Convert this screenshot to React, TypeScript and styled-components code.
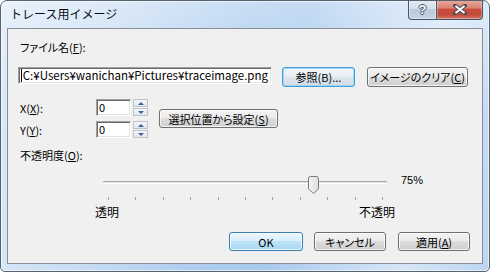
import React from 'react';
import styled, { createGlobalStyle } from 'styled-components';

const GlobalStyle = createGlobalStyle`
  html, body { margin: 0; padding: 0; background: #ffffff; }
  body {
    font-family: "Noto Sans CJK JP", "Liberation Sans", sans-serif;
    font-size: 12px;
    color: #000;
  }
  * { box-sizing: border-box; }
`;

const Window = styled.div`
  width: 490px;
  height: 272px;
  border: 1px solid #55636f;
  border-radius: 7px 7px 5px 5px;
  padding: 0 6px 7px 6px;
  display: flex;
  flex-direction: column;
  overflow: hidden;
  background:
    linear-gradient(180deg, rgba(255,255,255,0.35) 0%, rgba(255,255,255,0) 40%),
    linear-gradient(100deg, #dceaf8 0%, #c9def4 22%, #aecdef 45%, #a8c9ee 58%, #c3daf3 72%, #d6e6f7 84%, #bcd5f1 100%);
  box-shadow: inset 0 0 0 1px rgba(255,255,255,0.6);
`;

const TitleBar = styled.div`
  height: 27px;
  display: flex;
  align-items: flex-start;
  justify-content: space-between;
`;

const TitleText = styled.div`
  padding-left: 3px;
  line-height: 26px;
  font-size: 12px;
  color: #0b0b14;
`;

const CaptionButtons = styled.div`
  display: flex;
  margin-top: -1px;
`;

const HelpButton = styled.div`
  width: 28px;
  height: 20px;
  border: 1px solid #46556a;
  border-top: none;
  border-right: none;
  border-radius: 0 0 0 4px;
  background: linear-gradient(180deg, #e4ecf4 0%, #d3dfeb 45%, #b9cadb 50%, #c4d3e2 100%);
  box-shadow: inset 0 0 0 1px rgba(255,255,255,0.45);
  display: flex;
  align-items: center;
  justify-content: center;
  font-family: "Liberation Sans", sans-serif;
  font-weight: bold;
  font-size: 13px;
  color: #fff;
  text-shadow: 1px 0 0 #4a5566, -1px 0 0 #4a5566, 0 1px 0 #4a5566, 0 -1px 0 #4a5566;
`;

const CloseButton = styled.div`
  width: 47px;
  height: 20px;
  border: 1px solid #46556a;
  border-top: none;
  border-radius: 0 0 4px 0;
  background: linear-gradient(180deg, #e9aa9c 0%, #dc8474 42%, #c84a3a 50%, #c64b3b 78%, #d67a66 100%);
  box-shadow: inset 0 0 0 1px rgba(255,255,255,0.3);
  display: flex;
  align-items: center;
  justify-content: center;
`;

const Client = styled.div`
  flex: 1;
  background: #f0f0f0;
  border: 1px solid #858e99;
  display: flex;
  flex-direction: column;
  font-size: 11px;
  font-feature-settings: "palt";
`;

const Label = styled.div<{ $top: number; $left: number }>`
  margin-top: ${p => p.$top}px;
  padding-left: ${p => p.$left}px;
  line-height: 14px;
  white-space: nowrap;
`;

const Key = styled.span`
  text-decoration: underline;
  text-underline-offset: 1px;
`;

const PathRow = styled.div`
  display: flex;
  align-items: flex-start;
  margin-top: 13px;
  padding-left: 10px;
`;

const Field = styled.div<{ $width: number; $end?: boolean }>`
  position: relative;
  width: ${p => p.$width}px;
  height: 17px;
  background: #fff;
  border: 1px solid;
  border-color: #a0a0a0 #ffffff #ffffff #a0a0a0;
  box-shadow: inset 1px 1px 0 #696969, inset -1px -1px 0 #e3e3e3;
  padding: 0 3px 0 2px;
  line-height: 15px;
  overflow: hidden;
  white-space: nowrap;
  display: flex;
  align-items: center;
  justify-content: ${p => (p.$end ? 'flex-end' : 'flex-start')};
`;

const Caret = styled.span`
  position: absolute;
  left: 2px;
  top: 1px;
  width: 1px;
  height: 13px;
  background: #000;
`;

const PathText = styled.span`
  flex: none;
  font-feature-settings: normal;
  font-size: 11.5px;
`;

const Button = styled.div<{ $width: number; $height?: number; $gap?: number; $variant?: 'normal' | 'focus' | 'default' }>`
  width: ${p => p.$width}px;
  height: ${p => p.$height ?? 20}px;
  margin-left: ${p => p.$gap ?? 0}px;
  flex: none;
  border: 1px solid ${p => (p.$variant === 'focus' ? '#3d9fdc' : p.$variant === 'default' ? '#3c7fb1' : '#707070')};
  border-radius: 3px;
  background: ${p =>
    p.$variant === 'focus'
      ? 'linear-gradient(180deg, #f3f6f9 0%, #e9eef3 50%, #dde5ec 50%, #d3dde7 100%)'
      : p.$variant === 'default'
      ? 'linear-gradient(180deg, #e9f5fc 0%, #d9eefb 50%, #bde3f8 50%, #a9d8f2 100%)'
      : 'linear-gradient(180deg, #f2f2f2 0%, #ebebeb 50%, #dddddd 50%, #cfcfcf 100%)'};
  box-shadow: inset 0 0 0 1px ${p => (p.$variant === 'focus' ? '#9fd6f6' : 'rgba(255,255,255,0.75)')};
  display: flex;
  align-items: center;
  justify-content: center;
  line-height: 14px;
  white-space: nowrap;
`;

const XYGroup = styled.div`
  display: flex;
  align-items: center;
  margin-top: 12px;
  padding-left: 12px;
`;

const XYGrid = styled.div`
  display: grid;
  grid-template-columns: 76px auto;
  row-gap: 5px;
  align-items: center;
`;

const Spinner = styled.div`
  display: flex;
  align-items: flex-start;
  gap: 2px;
`;

const SpinButtons = styled.div`
  display: flex;
  flex-direction: column;
  gap: 1px;
`;

const SpinButton = styled.div<{ $dir: 'up' | 'down' }>`
  width: 15px;
  height: 8px;
  border: 1px solid #bcc4ce;
  background: linear-gradient(180deg, #f4f6f9 0%, #e2e7ee 100%);
  display: flex;
  align-items: center;
  justify-content: center;
  &::after {
    content: '';
    width: 0;
    height: 0;
    border-left: 3px solid transparent;
    border-right: 3px solid transparent;
    ${p => (p.$dir === 'up' ? 'border-bottom: 3px solid #3f5f96;' : 'border-top: 3px solid #3f5f96;')}
  }
`;

const SliderRow = styled.div`
  display: flex;
  align-items: flex-start;
  margin-top: 12px;
  padding-left: 95px;
`;

const Slider = styled.div`
  position: relative;
  width: 284px;
  height: 28px;
  display: flex;
  flex-direction: column;
`;

const Track = styled.div`
  margin-top: 7px;
  height: 3px;
  border-top: 1px solid #a9a9a9;
  border-bottom: 1px solid #ffffff;
  background: #e3e3e3;
  border-radius: 1px;
`;

const Ticks = styled.div`
  margin-top: 13px;
  margin-left: 5px;
  width: 275px;
  display: flex;
  justify-content: space-between;
`;

const Tick = styled.div`
  width: 1px;
  height: 3px;
  background: #a3a3a3;
`;

const Thumb = styled.svg`
  position: absolute;
  top: 2px;
`;

const Percent = styled.div`
  margin-left: 14px;
  margin-top: -1px;
  line-height: 14px;
  font-family: "Liberation Sans", sans-serif;
  font-size: 11px;
`;

const EndLabels = styled.div`
  display: flex;
  justify-content: space-between;
  width: 387px;
  padding-left: 87px;
  margin-top: 3px;
  line-height: 14px;
  font-size: 12px;
`;

const ButtonRow = styled.div`
  display: flex;
  justify-content: flex-end;
  margin-top: 13px;
  padding-right: 12px;
`;

export default function App() {
  const value = 75;
  const thumbLeft = 5 + (value / 100) * 274 - 5.5;
  return (
    <>
      <GlobalStyle />
      <Window>
        <TitleBar>
          <TitleText>トレース用イメージ</TitleText>
          <CaptionButtons>
            <HelpButton>?</HelpButton>
            <CloseButton>
              <svg width="14" height="11" viewBox="0 0 14 11">
                <path d="M2 1.5 L12 9.5 M12 1.5 L2 9.5" stroke="#4a4f5c" strokeWidth="4" strokeLinecap="square" />
                <path d="M2.5 2 L11.5 9 M11.5 2 L2.5 9" stroke="#ffffff" strokeWidth="2" />
              </svg>
            </CloseButton>
          </CaptionButtons>
        </TitleBar>
        <Client>
          <Label $top={11} $left={12}>
            ファイル名(<Key>F</Key>):
          </Label>
          <PathRow>
            <Field $width={254} $end>
              <PathText>C:¥Users¥wanichan¥Pictures¥traceimage.png</PathText>
              <Caret />
            </Field>
            <Button $width={73} $gap={10} $variant="focus">参照(B)...</Button>
            <Button $width={101} $gap={12}>
              イメージのクリア(<Key>C</Key>)
            </Button>
          </PathRow>
          <XYGroup>
            <XYGrid>
              <span>
                X(<Key>X</Key>):
              </span>
              <Spinner>
                <Field $width={35}>0</Field>
                <SpinButtons>
                  <SpinButton $dir="up" />
                  <SpinButton $dir="down" />
                </SpinButtons>
              </Spinner>
              <span>
                Y(<Key>Y</Key>):
              </span>
              <Spinner>
                <Field $width={35}>0</Field>
                <SpinButtons>
                  <SpinButton $dir="up" />
                  <SpinButton $dir="down" />
                </SpinButtons>
              </Spinner>
            </XYGrid>
            <Button $width={119} $height={19} $gap={11}>
              選択位置から設定(<Key>S</Key>)
            </Button>
          </XYGroup>
          <Label $top={10} $left={12}>
            不透明度(<Key>O</Key>):
          </Label>
          <SliderRow>
            <Slider>
              <Track />
              <Ticks>
                {Array.from({ length: 11 }).map((_, i) => (
                  <Tick key={i} />
                ))}
              </Ticks>
              <Thumb width="11" height="18" viewBox="0 0 11 18" style={{ left: thumbLeft }}>
                <defs>
                  <linearGradient id="tg" x1="0" y1="0" x2="1" y2="0">
                    <stop offset="0" stopColor="#f7f7f7" />
                    <stop offset="1" stopColor="#dcdcdc" />
                  </linearGradient>
                </defs>
                <path d="M0.5 2.5 Q0.5 0.5 2.5 0.5 L8.5 0.5 Q10.5 0.5 10.5 2.5 L10.5 13 L5.5 17.5 L0.5 13 Z" fill="url(#tg)" stroke="#7a7a7a" />
              </Thumb>
            </Slider>
            <Percent>75%</Percent>
          </SliderRow>
          <EndLabels>
            <span>透明</span>
            <span>不透明</span>
          </EndLabels>
          <ButtonRow>
            <Button $width={74} $height={19} $variant="default">OK</Button>
            <Button $width={72} $height={19} $gap={11}>キャンセル</Button>
            <Button $width={72} $height={19} $gap={12}>
              適用(<Key>A</Key>)
            </Button>
          </ButtonRow>
        </Client>
      </Window>
    </>
  );
}
